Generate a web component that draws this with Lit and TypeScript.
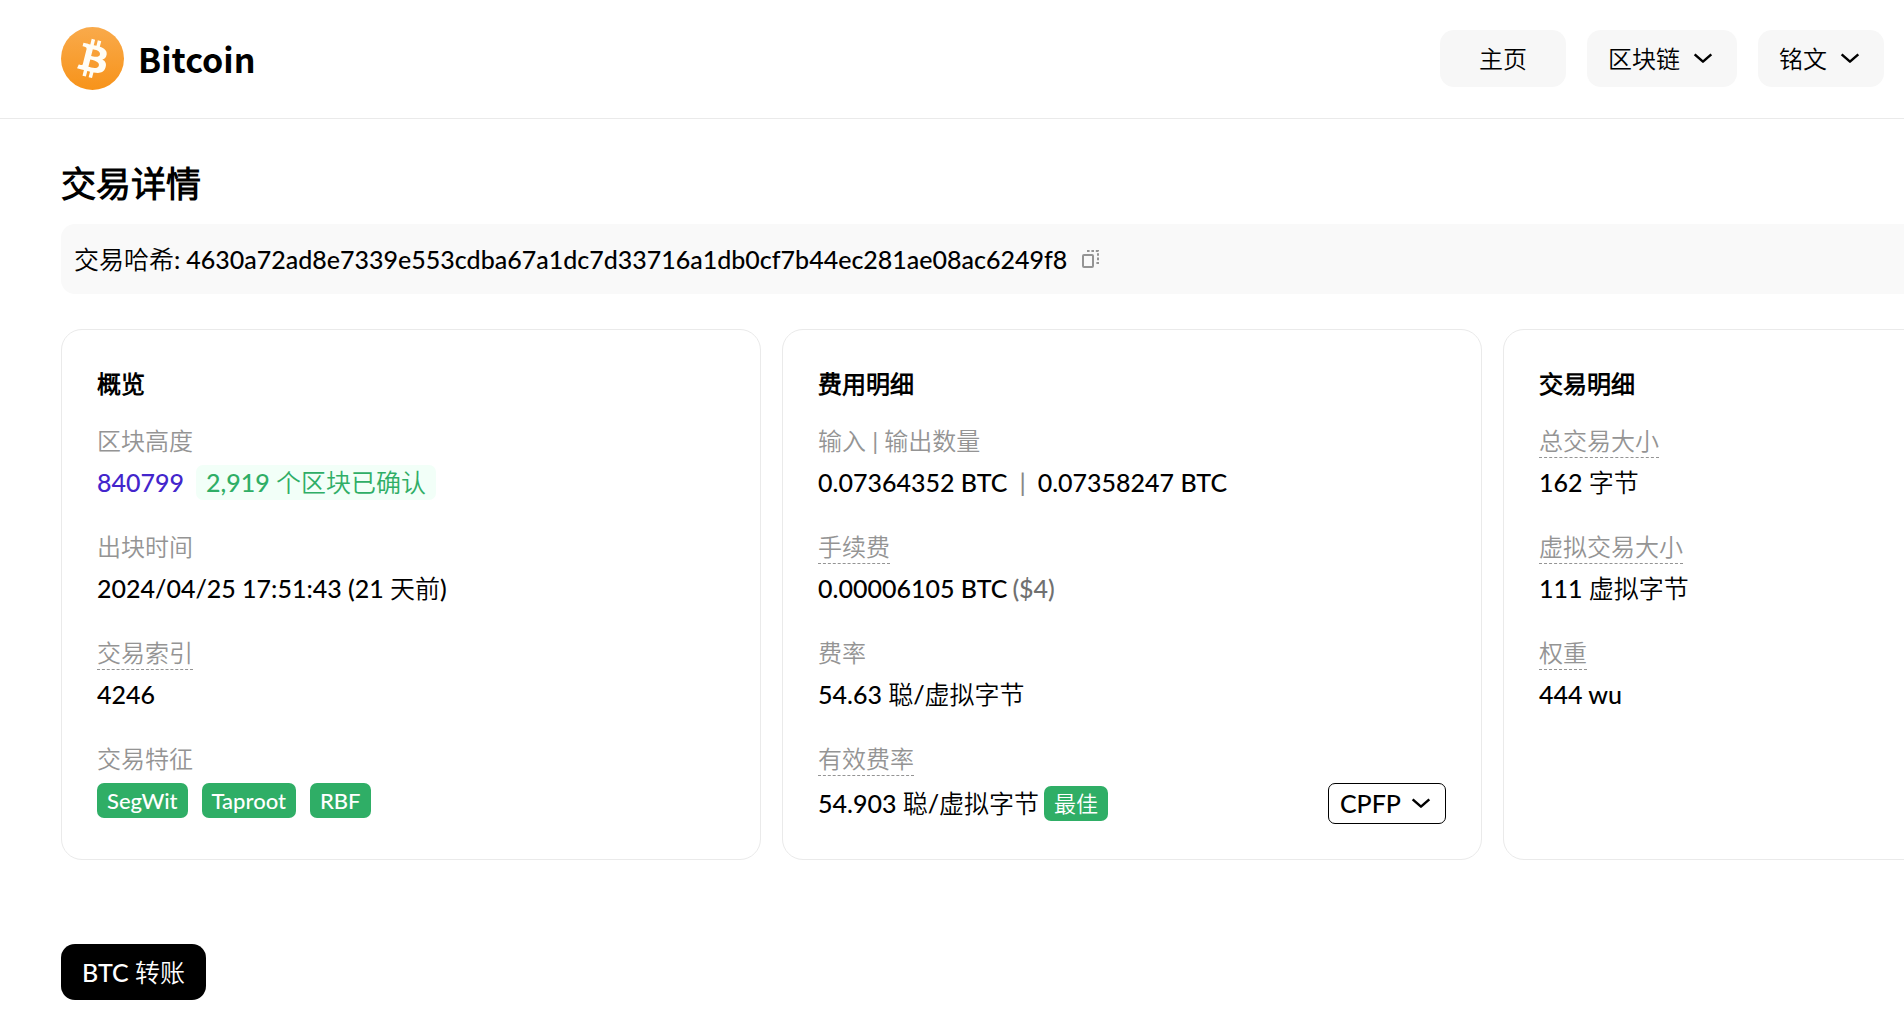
import { LitElement, html, css, svg, type TemplateResult } from "lit";
import { customElement, property } from "lit/decorators.js";
import { classMap } from "lit/directives/class-map.js";

const chevron = html`
  <svg class="chevron" viewBox="0 0 24 24" aria-hidden="true">
    <path d="M3.5 8 L11.5 15 L19.5 8" fill="none" stroke="currentColor" stroke-width="2.4" stroke-linejoin="round" />
  </svg>
`;

const bitcoinMark = svg`
  <path fill="#fffdf5" d="M23.189 14.02c.314-2.096-1.283-3.223-3.465-3.975l.708-2.84-1.728-.43-.69 2.765c-.454-.114-.92-.22-1.385-.326l.695-2.783L15.596 6l-.708 2.839c-.376-.086-.746-.17-1.104-.26l.002-.009-2.384-.595-.46 1.846s1.283.294 1.256.312c.7.175.826.638.805 1.006l-.806 3.235c.048.012.11.03.18.057l-.183-.045-1.13 4.532c-.086.212-.303.531-.793.41.018.025-1.256-.313-1.256-.313l-.858 1.978 2.25.561c.418.105.828.215 1.231.318l-.715 2.872 1.727.43.708-2.84c.472.127.93.245 1.378.357l-.706 2.828 1.728.43.715-2.866c2.948.558 5.164.333 6.097-2.333.752-2.146-.037-3.385-1.588-4.192 1.13-.26 1.98-1.003 2.207-2.538zm-3.95 5.538c-.533 2.147-4.148.986-5.32.695l.95-3.805c1.172.293 4.929.872 4.37 3.11zm.535-5.569c-.487 1.953-3.495.96-4.47.717l.86-3.45c.975.243 4.118.696 3.61 2.733z" />
`;

@customElement("site-header")
export class SiteHeader extends LitElement {
  static styles = css`
    :host {
      display: flex;
      align-items: center;
      justify-content: space-between;
      padding: 27px 20px 28px 61px;
      border-bottom: 1px solid #eaeaea;
      background: #fff;
      font-size: 24px;
      font-weight: 400;
    }
    .brand {
      display: flex;
      align-items: center;
      gap: 14px;
      color: #000;
      text-decoration: none;
      font: 700 34px/40px "Noto Sans CJK SC", sans-serif;
    }
    .logo {
      display: block;
      width: 63px;
      height: 63px;
    }
    .menu {
      display: flex;
      align-items: center;
      gap: 21px;
    }
    .item {
      display: flex;
      align-items: center;
      gap: 11px;
      min-height: 57px;
      box-sizing: border-box;
      padding: 0 21px;
      border: 0;
      border-radius: 14px;
      background: #f7f7f7;
      color: #000;
      font: inherit;
      text-decoration: none;
      cursor: pointer;
    }
    .home {
      padding: 0 39px;
    }
    .chevron {
      width: 25px;
      height: 25px;
    }
  `;

  render() {
    return html`
      <a class="brand" href="#">
        <svg class="logo" viewBox="0 0 32 32" aria-hidden="true">
          <defs>
            <linearGradient id="coin" x1="0" y1="0" x2="0" y2="1">
              <stop offset="0" stop-color="#f9aa4b" />
              <stop offset="1" stop-color="#f7931a" />
            </linearGradient>
          </defs>
          <circle cx="16" cy="16" r="16" fill="url(#coin)" />
          ${bitcoinMark}
        </svg>
        <span>Bitcoin</span>
      </a>
      <nav class="menu">
        <a class="item home" href="#">主页</a>
        <button class="item" type="button" aria-haspopup="true">区块链${chevron}</button>
        <button class="item" type="button" aria-haspopup="true">铭文${chevron}</button>
      </nav>
    `;
  }
}

interface Field {
  label: string;
  hint?: boolean;
  value: TemplateResult | string;
}

@customElement("detail-card")
export class DetailCard extends LitElement {
  @property() heading = "";
  @property({ attribute: false }) fields: Field[] = [];

  static styles = css`
    :host {
      display: block;
      box-sizing: border-box;
      padding: 35px;
      border: 1px solid #eaeaea;
      border-radius: 21px;
      background: #fff;
    }
    .heading {
      margin: 0 0 23px;
      font-size: 24px;
      line-height: 37px;
      font-weight: 700;
    }
    .list {
      display: grid;
      gap: 31px;
      margin: 0;
    }
    .field {
      display: grid;
      gap: 7px;
      justify-items: start;
    }
    .label {
      border-bottom: 1px solid transparent;
      color: #949494;
      font-size: 24px;
      line-height: 32px;
      font-weight: 400;
    }
    .hint {
      border-bottom: 1px dashed #949494;
    }
    .value {
      display: flex;
      align-items: center;
      justify-self: stretch;
      min-height: 35px;
      margin: 0;
      line-height: 35px;
      white-space: nowrap;
    }
    .link {
      color: #4325cc;
      text-decoration: none;
    }
    .confirmed {
      margin-left: 12px;
      padding: 0 10px;
      border-radius: 7px;
      background: #f2fff8;
      color: #2fae66;
    }
    .bar {
      margin: 0 12px;
      color: #888;
    }
    .muted {
      margin-left: 5px;
      color: #707070;
    }
    .tags {
      display: flex;
      gap: 14px;
    }
    .tag {
      padding: 0 10px;
      border-radius: 7px;
      background: #2fae66;
      color: #fff;
      font-size: 22px;
    }
    .best {
      margin-left: 5px;
    }
    .toggle {
      display: flex;
      align-items: center;
      gap: 8px;
      height: 41px;
      margin-left: auto;
      padding: 0 11px;
      border: 1px solid #000;
      border-radius: 7px;
      background: #fff;
      color: #000;
      font: inherit;
      cursor: pointer;
    }
    .chevron {
      width: 25px;
      height: 25px;
    }
  `;

  render() {
    return html`
      <h2 class="heading">${this.heading}</h2>
      <dl class="list">
        ${this.fields.map(
          (f) => html`
            <div class="field">
              <dt class=${classMap({ label: true, hint: !!f.hint })}>${f.label}</dt>
              <dd class="value">${f.value}</dd>
            </div>
          `,
        )}
      </dl>
    `;
  }
}

const overview: Field[] = [
  {
    label: "区块高度",
    value: html`<a class="link" href="#">840799</a><span class="confirmed">2,919 个区块已确认</span>`,
  },
  { label: "出块时间", value: "2024/04/25 17:51:43 (21 天前)" },
  { label: "交易索引", hint: true, value: "4246" },
  {
    label: "交易特征",
    value: html`<span class="tags">
      <span class="tag">SegWit</span><span class="tag">Taproot</span><span class="tag">RBF</span>
    </span>`,
  },
];

const fees: Field[] = [
  {
    label: "输入 | 输出数量",
    value: html`<span>0.07364352 BTC</span><span class="bar">|</span><span>0.07358247 BTC</span>`,
  },
  {
    label: "手续费",
    hint: true,
    value: html`<span>0.00006105 BTC</span><span class="muted">($4)</span>`,
  },
  { label: "费率", value: "54.63 聪/虚拟字节" },
  {
    label: "有效费率",
    hint: true,
    value: html`<span>54.903 聪/虚拟字节</span><span class="tag best">最佳</span>
      <button class="toggle" type="button" aria-expanded="false">CPFP${chevron}</button>`,
  },
];

const details: Field[] = [
  { label: "总交易大小", hint: true, value: "162 字节" },
  { label: "虚拟交易大小", hint: true, value: "111 虚拟字节" },
  { label: "权重", hint: true, value: "444 wu" },
];

@customElement("app-root")
export class AppRoot extends LitElement {
  static styles = css`
    :host {
      display: block;
      min-height: 100vh;
      overflow: hidden;
      background: #fff;
      color: #000;
      font: 500 25px/36px Lato, "Noto Sans CJK SC DemiLight", "Noto Sans CJK SC", sans-serif;
    }
    .page {
      display: grid;
      min-width: max-content;
      box-sizing: border-box;
      padding: 40px 20px 21px 61px;
    }
    .title {
      margin: 0 0 17px;
      font-size: 35px;
      line-height: 48px;
      font-weight: 700;
    }
    .hash {
      display: flex;
      align-items: center;
      min-height: 70px;
      padding: 0 13px;
      border-radius: 14px;
      background: #f9f9f9;
    }
    .digest {
      margin-left: 6px;
    }
    .copy {
      display: flex;
      margin-left: 14px;
      padding: 0;
      border: 0;
      background: none;
      color: #949494;
      cursor: pointer;
    }
    .icon {
      width: 20px;
      height: 20px;
    }
    .cards {
      display: grid;
      grid-template-columns: repeat(3, minmax(700px, 1fr));
      gap: 21px;
      margin-top: 35px;
    }
    .transfer {
      justify-self: start;
      min-height: 56px;
      margin-top: 84px;
      padding: 0 21px;
      border: 0;
      border-radius: 14px;
      background: #000;
      color: #fff;
      font: inherit;
      cursor: pointer;
    }
  `;

  render() {
    return html`
      <site-header></site-header>
      <main class="page">
        <h1 class="title">交易详情</h1>
        <div class="hash">
          <span>交易哈希:</span>
          <span class="digest">4630a72ad8e7339e553cdba67a1dc7d33716a1db0cf7b44ec281ae08ac6249f8</span>
          <button class="copy" type="button" aria-label="复制">
            <svg class="icon" viewBox="0 0 20 20" fill="none" stroke="currentColor" stroke-width="2" aria-hidden="true">
              <rect x="2" y="6" width="10" height="12" rx="1" />
              <path d="M6 2 H17 V14 H14" stroke-dasharray="2.6 1.8" />
            </svg>
          </button>
        </div>
        <div class="cards">
          <detail-card heading="概览" .fields=${overview}></detail-card>
          <detail-card heading="费用明细" .fields=${fees}></detail-card>
          <detail-card heading="交易明细" .fields=${details}></detail-card>
        </div>
        <button class="transfer" type="button">BTC 转账</button>
      </main>
    `;
  }
}
